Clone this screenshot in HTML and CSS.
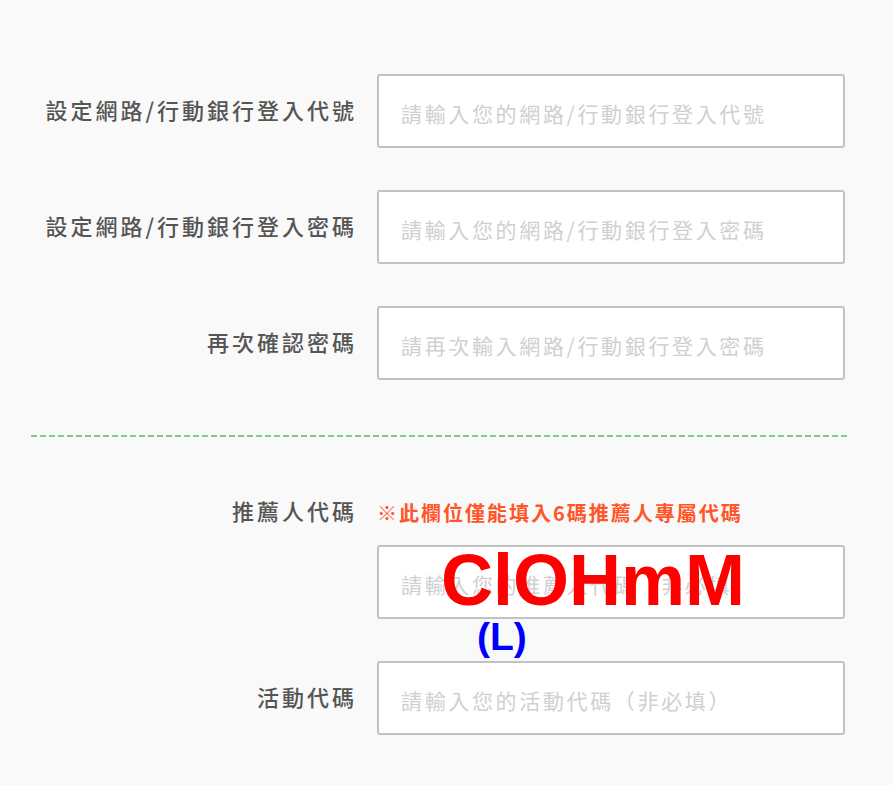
FILE: index.html
```html
<html>
<head>
    <meta charset="utf-8">
    <title>網路/行動銀行登入設定</title>
    <meta name="viewport" content="width=device-width, initial-scale=1.0">
    <link rel="stylesheet" href="styles.css">
</head>
<body>
    <div class="form">
        <div class="form-row">
            <label class="form-label" for="loginId">設定網路/行動銀行登入代號</label>
            <input type="text" id="loginId" class="text-input" placeholder="請輸入您的網路/行動銀行登入代號">
        </div>
        <div class="form-row">
            <label class="form-label" for="loginPwd">設定網路/行動銀行登入密碼</label>
            <input type="password" id="loginPwd" class="text-input" placeholder="請輸入您的網路/行動銀行登入密碼">
        </div>
        <div class="form-row">
            <label class="form-label" for="loginPwd2">再次確認密碼</label>
            <input type="password" id="loginPwd2" class="text-input" placeholder="請再次輸入網路/行動銀行登入密碼">
        </div>

        <div class="divider"></div>

        <div class="form-row referrer-head">
            <label class="form-label" for="referrer">推薦人代碼</label>
            <span class="note">※此欄位僅能填入6碼推薦人專屬代碼</span>
        </div>
        <div class="form-row referrer-input">
            <span></span>
            <div class="input-wrap">
                <input type="text" id="referrer" class="text-input" placeholder="請輸入您的推薦人代碼（非必填）">
                <span class="mark-code">ClOHmM</span>
                <span class="mark-tag">(L)</span>
            </div>
        </div>
        <div class="form-row last">
            <label class="form-label" for="eventCode">活動代碼</label>
            <input type="text" id="eventCode" class="text-input" placeholder="請輸入您的活動代碼（非必填）">
        </div>
    </div>
</body>
</html>
```

FILE: styles.css
```css
body {
    margin: 0;
    padding: 0;
    background-color: #f9f9f9;
    font-family: "Noto Sans CJK TC", "Noto Sans", sans-serif;
    color: #555;
}
.form {
    width: 819px;
    padding: 74px 0 40px 31px;
}
.form-row {
    display: grid;
    grid-template-columns: 326px 468px;
    column-gap: 20px;
    align-items: center;
    margin-bottom: 42px;
}
.form-row.last {
    margin-bottom: 0;
}
.form-label {
    text-align: right;
    font-size: 22px;
    font-weight: 500;
    letter-spacing: 3px;
    color: #555;
    padding-bottom: 4px;
}
.text-input {
    box-sizing: border-box;
    width: 468px;
    height: 74px;
    padding: 3px 22px 0;
    border: 2px solid #c2c2c2;
    border-radius: 3px;
    background: white;
    font-family: "Noto Sans CJK TC", "Noto Sans", sans-serif;
    font-size: 21px;
    letter-spacing: 2.65px;
    color: #333;
}
.text-input::placeholder {
    color: #d0d0d0;
}
.divider {
    margin: 55px 0 57px;
    height: 2px;
    background: repeating-linear-gradient(to right, #7ccd88 0 6px, transparent 6px 9px);
}
.referrer-head {
    margin-bottom: 15px;
}
.note {
    color: #ff5528;
    font-size: 20px;
    font-weight: bold;
    letter-spacing: 2px;
    white-space: nowrap;
}
.referrer-input {
    margin-bottom: 42px;
}
.input-wrap {
    position: relative;
}
.mark-code {
    position: absolute;
    left: 64px;
    top: -6px;
    font-family: "Liberation Sans", Arial, sans-serif;
    font-weight: bold;
    font-size: 72px;
    color: #ff0000;
}
.mark-tag {
    position: absolute;
    left: 100px;
    top: 70px;
    font-family: "Liberation Sans", Arial, sans-serif;
    font-weight: bold;
    font-size: 39px;
    color: #0000ff;
}
```
